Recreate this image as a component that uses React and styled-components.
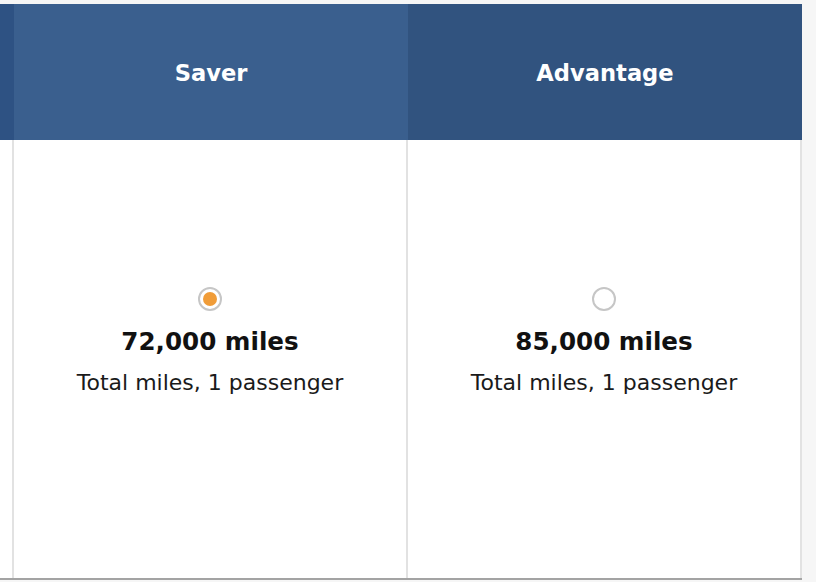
import styled, { createGlobalStyle } from "styled-components";

const GlobalStyle = createGlobalStyle`
body{
margin:0;
background:#f6f6f6;
font-family:"DejaVu Sans","Liberation Sans",sans-serif;
}
`;

const fares = [
    { name: "Saver", miles: "72,000 miles", selected: true, tone: "#3a5f8e" },
    { name: "Advantage", miles: "85,000 miles", selected: false, tone: "#31537f" },
];

const App = () => {
    return (
        <>
            <GlobalStyle />
            <Table>
                <HeaderRow>
                    <HeadCell $tone="#2e5283" />
                    {fares.map((f) => (
                        <HeadCell key={f.name} $tone={f.tone}>{f.name}</HeadCell>
                    ))}
                </HeaderRow>
                <BodyRow>
                    <BodyCell />
                    {fares.map((f) => (
                        <BodyCell key={f.name}>
                            <Radio $on={f.selected} />
                            <Miles>{f.miles}</Miles>
                            <Note>Total miles, 1 passenger</Note>
                        </BodyCell>
                    ))}
                </BodyRow>
            </Table>
        </>
    );
};

const Table = styled.div`
margin-top:4px;
width:802px;
background:white;
border-bottom:2px solid #a3a3a3;
`;

const HeaderRow = styled.div`
display:grid;
grid-template-columns:14px 394px 394px;
height:136px;
`;

const HeadCell = styled.div`
background:${(p) => p.$tone};
color:white;
font-weight:700;
font-size:22.6px;
display:flex;
align-items:center;
justify-content:center;
padding-top:1px;
`;

const BodyRow = styled.div`
display:grid;
grid-template-columns:14px 394px 394px;
height:438px;
`;

const BodyCell = styled.div`
border-right:2px solid #e2e2e2;
display:flex;
flex-direction:column;
align-items:center;
padding-top:147px;
`;

const Radio = styled.div`
width:24px;
height:24px;
box-sizing:border-box;
border:2px solid #c6c6c6;
border-radius:50%;
display:flex;
align-items:center;
justify-content:center;
margin-bottom:16px;

&::after{
content:"";
width:14px;
height:14px;
border-radius:50%;
background:${(p) => (p.$on ? "#f09c38" : "transparent")};
}
`;

const Miles = styled.div`
font-weight:700;
font-size:24.6px;
color:#111;
line-height:30px;
`;

const Note = styled.div`
font-size:22px;
color:#1a1a1a;
line-height:26px;
margin-top:13px;
`;

export default App;
